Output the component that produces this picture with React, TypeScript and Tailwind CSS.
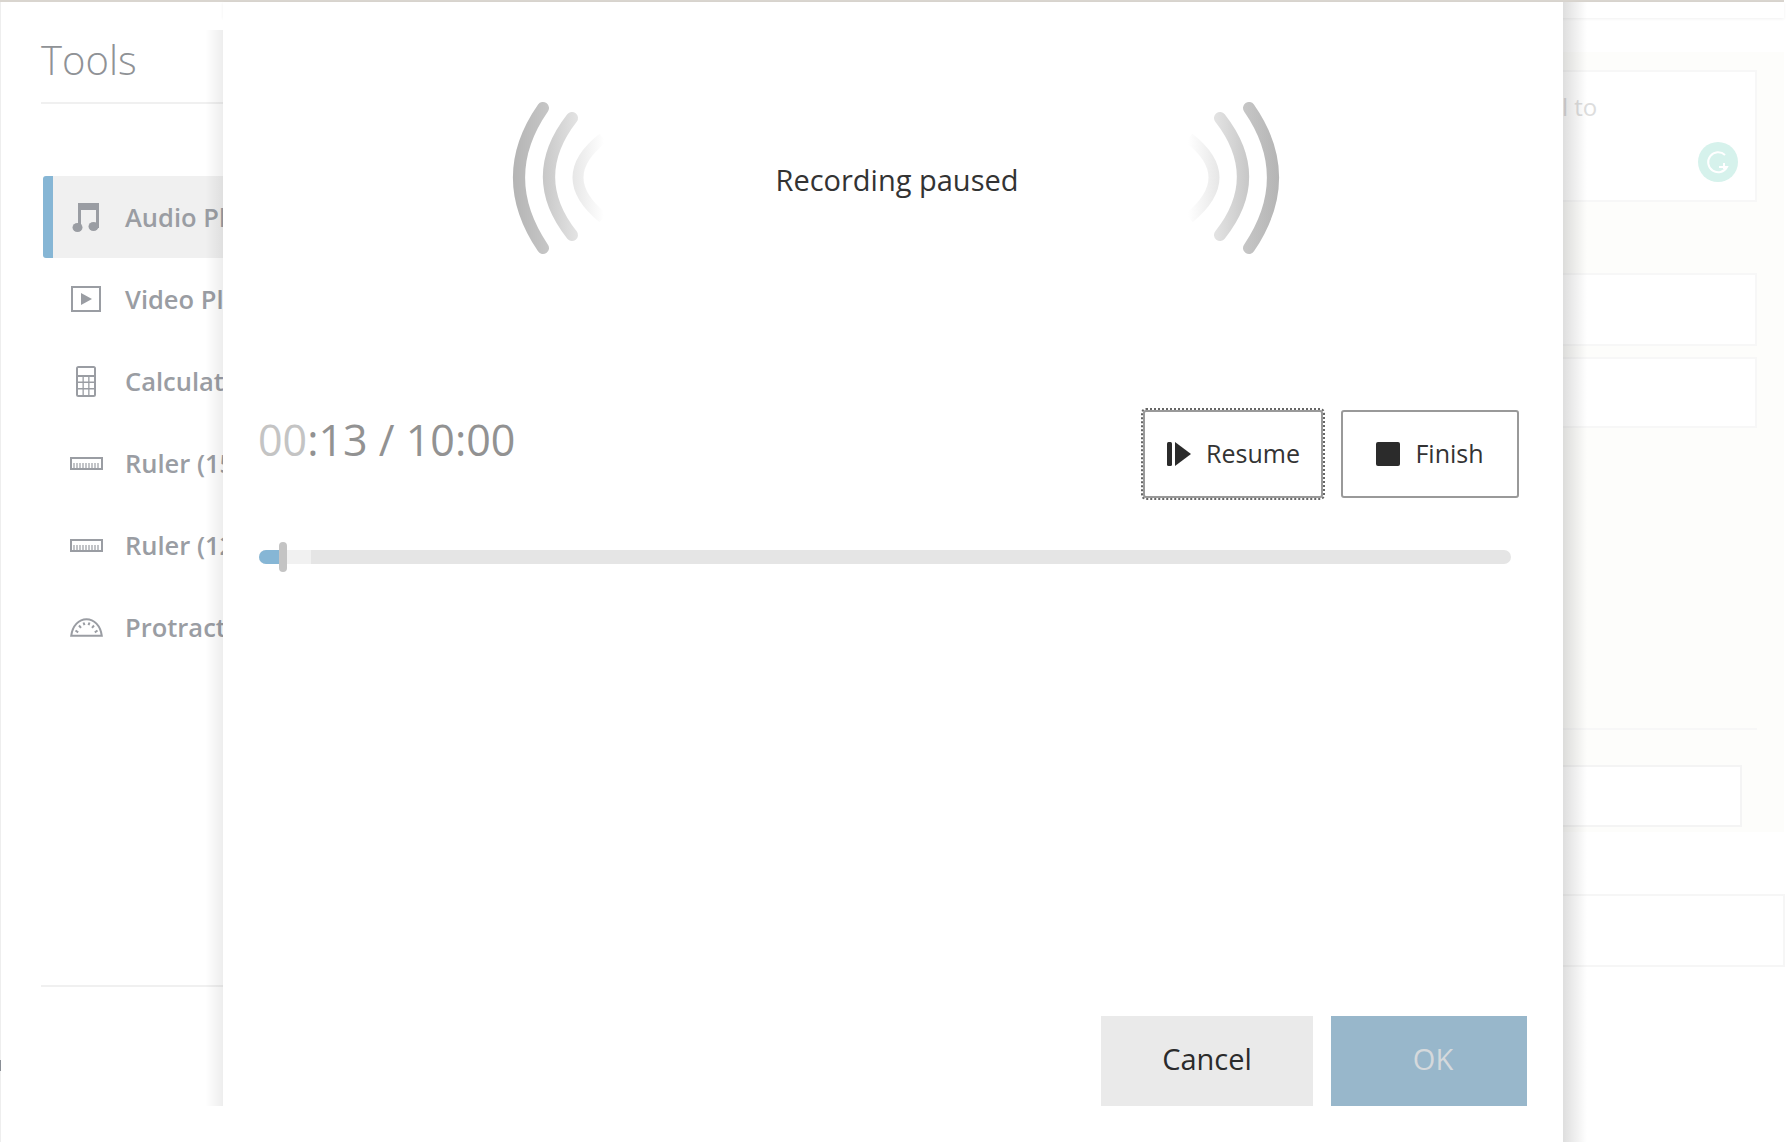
import React from 'react';

const MusicIcon = () => (
  <svg width="30" height="30" viewBox="0 0 30 30" fill="#9a9da3">
    <path d="M7 1h21v25h-3V8H10v20H7z" />
    <ellipse cx="6.5" cy="25.5" rx="5" ry="4.5" />
    <ellipse cx="22.5" cy="24.5" rx="5" ry="4.5" />
  </svg>
);

const VideoIcon = () => (
  <svg width="32" height="28" viewBox="0 0 32 28" fill="none" stroke="#9a9da3" strokeWidth="2">
    <rect x="2" y="2" width="28" height="24" />
    <path d="M11 8l11 6-11 6z" fill="#9a9da3" stroke="none" />
  </svg>
);

const CalculatorIcon = () => (
  <svg width="20" height="31" viewBox="0 0 20 31" fill="#9a9da3">
    <path
      fillRule="evenodd"
      d="M2.5 0h15A2.5 2.5 0 0 1 20 2.5v26a2.5 2.5 0 0 1-2.5 2.5h-15A2.5 2.5 0 0 1 0 28.500v-26A2.500 2.500 0 0 1 2.500 0zM2 2v7h16V2zM2 11v4.500h4.500V11zM7.800 11v4.500h4.400V11zM13.500 11v4.500H18V11zM2 17v5h4.500v-5zM7.800 17v5h4.400v-5zM13.500 17v5H18v-5zM2 23.500V29h4.500v-5.500zM7.800 23.500V29h4.400v-5.500zM13.500 23.500V29H18v-5.500z"
    />
  </svg>
);

const RulerIcon = () => (
  <svg width="33" height="13" viewBox="0 0 33 13" fill="none" stroke="#9a9da3">
    <rect x="1" y="1" width="31" height="11" strokeWidth="2" />
    <path d="M4 11V6M7 11V6M10 11V6M13 11V6M16 11V6M19 11V6M22 11V6M25 11V6M28 11V6" strokeWidth="1.2" />
  </svg>
);

const ProtractorIcon = () => (
  <svg width="33" height="19" viewBox="0 0 33 19" fill="none" stroke="#9a9da3">
    <path d="M1.200 17.800C2.500 7.500 9 1.200 16.500 1.200S30.500 7.500 31.800 17.800z" strokeWidth="2" />
    <path
      d="M5.500 12.500l2.700 1.800M9 7.500l2 2.300M13.500 4.500l1 2.700M19.500 4.500l-1 2.700M24 7.500l-2 2.300M27.500 12.500l-2.700 1.800"
      strokeWidth="2"
    />
  </svg>
);

const tools = [
  { label: 'Audio Player', icon: <MusicIcon />, active: true },
  { label: 'Video Player', icon: <VideoIcon />, active: false },
  { label: 'Calculator', icon: <CalculatorIcon />, active: false },
  { label: 'Ruler (15 cm)', icon: <RulerIcon />, active: false },
  { label: 'Ruler (12 in)', icon: <RulerIcon />, active: false },
  { label: 'Protractor', icon: <ProtractorIcon />, active: false },
];

// Three fading arcs, drawn for the left side and flipped for the right
const Waves = ({ flip }: { flip?: boolean }) => {
  const id = flip ? 'r' : 'l';
  return (
    <svg width="110" height="160" viewBox="0 0 110 160" fill="none" strokeLinecap="round" className={flip ? '-scale-x-100' : ''}>
      <defs>
        <linearGradient id={`${id}a`} x1="4" y1="0" x2="38" y2="0" gradientUnits="userSpaceOnUse">
          <stop offset="0" stopColor="#b5b5b5" />
          <stop offset="1" stopColor="#c6c6c6" />
        </linearGradient>
        <linearGradient id={`${id}b`} x1="34" y1="0" x2="66" y2="0" gradientUnits="userSpaceOnUse">
          <stop offset="0" stopColor="#c8c8c8" />
          <stop offset="1" stopColor="#e2e2e2" />
        </linearGradient>
        <linearGradient id={`${id}c`} x1="62" y1="0" x2="94" y2="0" gradientUnits="userSpaceOnUse">
          <stop offset="0" stopColor="#e6e6e6" />
          <stop offset="1" stopColor="#ffffff" />
        </linearGradient>
      </defs>
      <path d="M33 8Q-15 77 33 148" stroke={`url(#${id}a)`} strokeWidth="12" />
      <path d="M62 18Q16 77 62 135" stroke={`url(#${id}b)`} strokeWidth="12" />
      <path d="M93 38Q43 77 93 118" stroke={`url(#${id}c)`} strokeWidth="11" strokeLinecap="butt" />
    </svg>
  );
};

export default function App() {
  return (
    <div className="h-[1142px] w-[1786px] overflow-hidden bg-white font-['Open_Sans',sans-serif] flex flex-col">
      <div className="h-[2px] w-[1784px] shrink-0 bg-[#d9d5cf]" />
      <div className="relative flex flex-1 min-h-0">
        {/* Page behind the dialog */}
        <aside className="w-[223px] shrink-0 overflow-hidden border-l border-[#eeeeee] pl-[40px]">
          <h2 className="pt-[30px] h-[102px] text-[40px] leading-[56px] font-light text-[#8f9296] border-b-2 border-[#f0f0f0] w-[300px]">
            Tools
          </h2>
          <ul className="mt-[72px] w-[300px]">
            {tools.map((t) => (
              <li
                key={t.label}
                className={`flex h-[82px] items-center whitespace-nowrap text-[25.5px] font-semibold text-[#9a9da3] ${
                  t.active ? 'ml-[2px] rounded-l-[3px] bg-[#f0f0f0] border-l-[10px] border-[#86b6d5]' : 'ml-[12px]'
                }`}
              >
                <span className="ml-[3px] flex w-[60px] justify-center">{t.icon}</span>
                <span className="ml-[9px]">{t.label}</span>
              </li>
            ))}
          </ul>
          <div className="mt-[317px] h-[2px] w-[300px] bg-[#f0f0f0]" />
        </aside>

        <main className="flex-1 min-w-0">
          <div className="mr-[2px] h-[16px] bg-white shadow-[0_1px_3px_rgba(0,0,0,0.06)]" />
          <div className="mr-[2px] mt-[34px] h-[780px] bg-[#fdfdfb] pt-[18px]">
            <div className="relative ml-[1200px] mr-[27px] h-[132px] border-2 border-[#f7f7f7] bg-white">
              <p className="pl-[137px] pt-[17px] text-[24px] leading-[36px] whitespace-nowrap text-[#dddddd]">l to</p>
              <div className="absolute right-[17px] top-[70px] flex h-[40px] w-[40px] items-center justify-center rounded-full bg-[#d6f2ec]">
                <svg width="26" height="26" viewBox="0 0 26 26" fill="none" stroke="#ffffff" strokeWidth="2">
                  <path d="M20 6A10 10 0 1 0 22 18H14" />
                  <path d="M19 14v6" />
                </svg>
              </div>
            </div>
            <div className="ml-[1200px] mr-[27px] mt-[71px] h-[73px] border-2 border-[#f7f7f7] bg-white" />
            <div className="ml-[1200px] mr-[27px] mt-[11px] h-[71px] border-2 border-[#f7f7f7] bg-white" />
            <div className="ml-[1200px] mr-[27px] mt-[300px] h-[2px] bg-[#f7f7f7]" />
            <div className="ml-[1200px] mr-[42px] mt-[35px] h-[62px] border-2 border-[#f4f4f4] bg-white" />
          </div>
          <div className="ml-[1200px] mr-[1px] mt-[62px] h-[73px] border-2 border-[#f6f6f6] bg-white" />
        </main>

        {/* Recording dialog */}
        <section className="absolute inset-y-0 left-[223px] flex w-[1340px] flex-col bg-white">
          <div className="flex h-[408px] items-start justify-center pl-[6px] pt-[98px]">
            <Waves />
            <p className="flex h-[160px] w-[552px] items-center justify-center pl-[2px] text-[29px] leading-[40px] text-[#333333]">
              Recording paused
            </p>
            <Waves flip />
          </div>
          <div className="flex h-[69px] items-start justify-between pl-[35px] pr-[44px]">
            <div className="text-[43px] leading-[60px] text-[#929292]">
              <span className="text-[#c4c4c4]">00</span>:13 / 10:00
            </div>
            <div className="flex gap-[18px]">
              <button className="flex h-[88px] w-[180px] items-center justify-center gap-[14px] rounded-[3px] border-2 border-[#999999] text-[25px] text-[#333333] outline-2 outline-dotted outline-[#666666]">
                <svg width="26" height="24" viewBox="0 0 26 24" fill="#2b2b2b">
                  <rect x="1" y="0" width="5" height="24" rx="1.500" />
                  <path d="M9 0l16 12L9 24z" />
                </svg>
                Resume
              </button>
              <button className="flex h-[88px] w-[178px] items-center justify-center gap-[15px] rounded-[3px] border-2 border-[#999999] text-[25px] text-[#333333]">
                <span className="h-[24px] w-[24px] rounded-[2px] bg-[#2b2b2b]" />
                Finish
              </button>
            </div>
          </div>
          <div className="relative ml-[36px] mr-[52px] mt-[71px] h-[14px] rounded-[7px] bg-[#e5e5e5]">
            <div className="h-full w-[52px] rounded-l-[7px] bg-[#f1f1f1]" />
            <div className="absolute left-0 top-0 h-full w-[22px] rounded-l-[7px] bg-[#86b6d5]" />
            <div className="absolute left-[20px] top-[-8px] h-[30px] w-[8px] rounded-[4px] bg-[#c4c4c4]" />
          </div>
          <div className="mt-auto flex justify-end gap-[18px] pb-[36px] pr-[36px]">
            <button className="h-[90px] w-[212px] bg-[#eaeaea] pb-[4px] text-[29px] text-[#2b2b2b]">Cancel</button>
            <button className="h-[90px] w-[196px] bg-[#98b7cb] pb-[4px] pl-[8px] text-[29px] text-[#d5d9dc]">OK</button>
          </div>
        </section>

        {/* Dialog edge shadows */}
        <div className="absolute left-[205px] top-[28px] h-[1076px] w-[18px] bg-gradient-to-r from-transparent to-black/[.07]" />
        <div className="absolute inset-y-0 left-[1563px] w-[24px] bg-gradient-to-l from-transparent to-black/[.13]" />
        <div className="absolute left-0 top-[1058px] h-[11px] w-px bg-[#8a8f96]" />
      </div>
    </div>
  );
}
